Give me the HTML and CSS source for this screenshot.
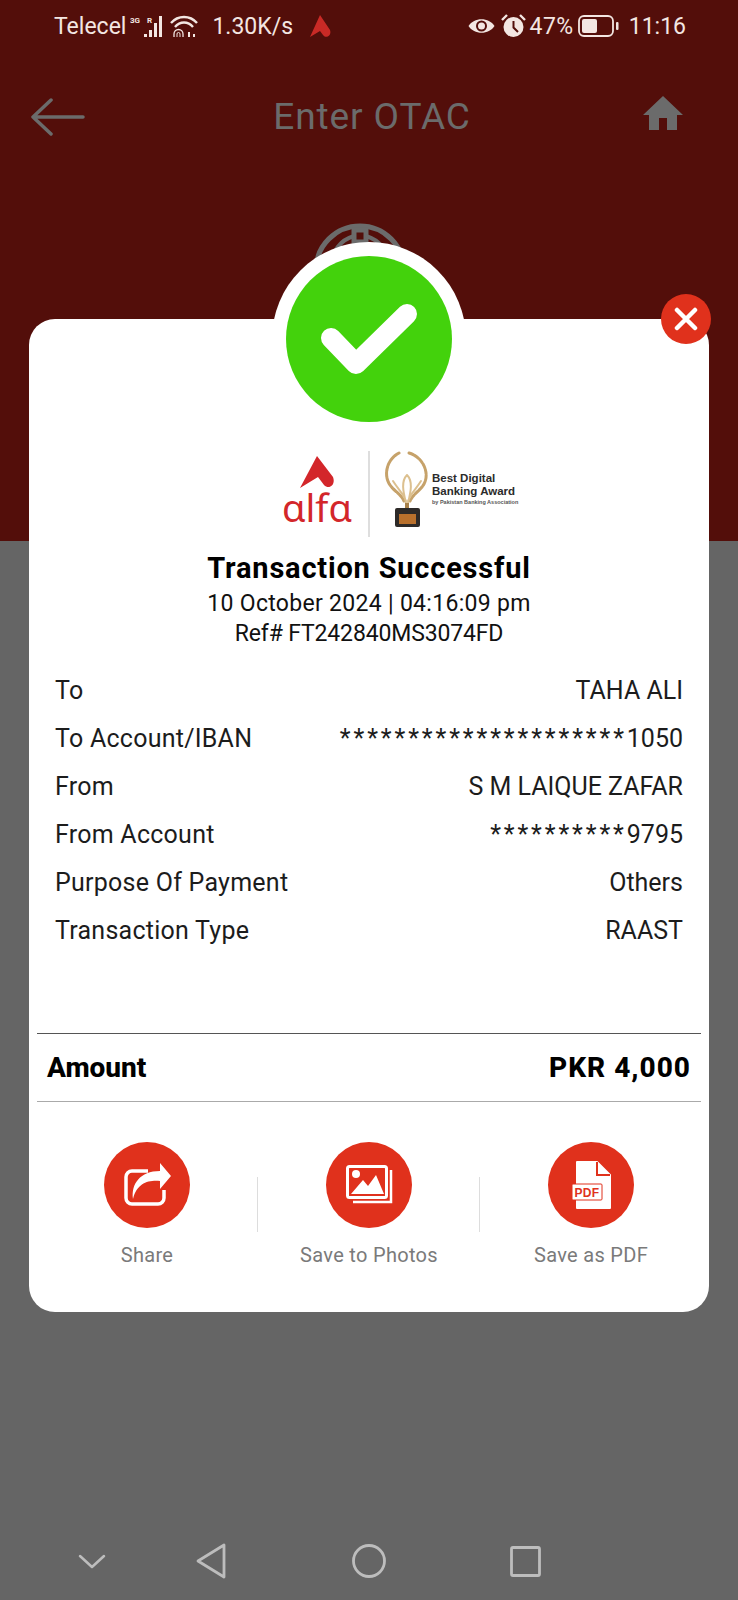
FILE: index.html
```html
<!DOCTYPE html>
<html lang="en">
<head>
  <meta charset="UTF-8">
  <title>Enter OTAC</title>
  <meta name="viewport" content="width=device-width, initial-scale=1.0"/>
  <link rel="stylesheet" href="styles.css">
</head>
<body>
  <div class="screen">
    <div class="top">
      <div class="status">
        <div class="status-left">
          <span>Telecel</span>
          <svg class="ic-signal" width="33" height="24" viewBox="0 0 33 24">
            <text x="0" y="9" class="tiny">3G</text>
            <text x="17" y="9" class="tiny">R</text>
            <g fill="#f3e6e2">
              <rect x="14" y="20" width="3" height="3"/>
              <rect x="19" y="16" width="3" height="7"/>
              <rect x="24" y="9" width="3" height="14"/>
              <rect x="29" y="2" width="3" height="21"/>
            </g>
          </svg>
          <svg class="ic-wifi" width="30" height="24" viewBox="0 0 30 24" fill="none" stroke="#f3e6e2" stroke-width="2.4">
            <path d="M1 9C8 1 20 1 27 9"/>
            <path d="M5 13C10 7 18 7 23 13"/>
            <path d="M4 23V20a4.500 4.500 0 0 1 9 0V23" stroke-width="1.300"/>
            <path d="M7 23V20a1.500 1.500 0 0 1 3 0V23" stroke-width="1"/>
            <path d="M19 18V23M24 20V23" stroke-width="2"/>
          </svg>
          <span class="speed">1.30K/s</span>
          <svg class="ic-flame" width="22" height="23" viewBox="0 0 22 23">
            <path d="M11 0L21 15C23 21 17 24 14 20L11 16L1 22Z" fill="#c92a26"/>
          </svg>
        </div>
        <div class="status-right">
          <svg width="27" height="18" viewBox="0 0 27 18">
            <path d="M0.500 9C6 0 21 0 26.500 9C21 18 6 18 0.500 9Z" fill="#f3e6e2"/>
            <circle cx="13.500" cy="9" r="5.500" fill="#530e0a"/>
            <circle cx="13.500" cy="9" r="3.500" fill="#f3e6e2"/>
          </svg>
          <svg class="ic-alarm" width="25" height="24" viewBox="0 0 25 24">
            <circle cx="12.500" cy="13" r="10" fill="#f3e6e2"/>
            <path d="M12.500 7V13.500L17 18" fill="none" stroke="#530e0a" stroke-width="2"/>
            <path d="M1 6L6 1M24 6L19 1" stroke="#f3e6e2" stroke-width="2.400"/>
          </svg>
          <span class="pct">47%</span>
          <svg class="ic-batt" width="41" height="22" viewBox="0 0 41 22">
            <rect x="1" y="1" width="34" height="20" rx="5" fill="none" stroke="#f3e6e2" stroke-width="1.800"/>
            <rect x="4" y="4" width="15" height="14" rx="2" fill="#f3e6e2"/>
            <rect x="38" y="7" width="2.500" height="8" rx="1" fill="#f3e6e2"/>
          </svg>
          <span class="clock">11:16</span>
        </div>
      </div>

      <div class="toolbar">
        <svg width="54" height="38" viewBox="0 0 54 38" fill="none" stroke="#6b6b6b" stroke-width="3.500" stroke-linecap="round" stroke-linejoin="round">
          <path d="M52 19H2M20 2L2 19L20 36"/>
        </svg>
        <h1>Enter OTAC</h1>
        <svg class="home" width="40" height="34" viewBox="0 0 40 34" fill="#6b6b6b">
          <path d="M20 0L40 19H34V34H24V22H16V34H6V19H0Z"/>
        </svg>
      </div>

      <svg class="globe" width="96" height="60" viewBox="0 0 96 60" fill="none" stroke="#6b6b6b" stroke-width="5">
        <circle cx="48" cy="48" r="44"/>
        <rect x="42" y="8" width="12" height="12"/>
        <path d="M42 14C28 18 20 30 18 44M54 14C68 18 76 30 78 44" stroke-width="4"/>
      </svg>
    </div>
    <div class="bottom"></div>

    <div class="modal">
      <div class="badge">
        <div class="badge-green">
          <svg width="96" height="72" viewBox="0 0 96 72" fill="none" stroke="#fff" stroke-width="20" stroke-linecap="round" stroke-linejoin="round">
            <path d="M10 35L35 61L86 11"/>
          </svg>
        </div>
      </div>
      <div class="close">
        <svg width="24" height="24" viewBox="0 0 24 24" stroke="#fff" stroke-width="4.500" stroke-linecap="round">
          <path d="M3 3L21 21M21 3L3 21"/>
        </svg>
      </div>

      <div class="logos">
        <div class="alfa">
          <svg width="35" height="33" viewBox="0 0 35 33">
            <path d="M17 0L33 21C36 29 29 34 24 29L18 21L0 32Z" fill="#d3262a"/>
          </svg>
          <span class="alfa-name">αlfα</span>
        </div>
        <div class="logo-line"></div>
        <div class="award">
          <svg width="46" height="76" viewBox="0 0 46 76" fill="none" stroke="#c6a26a" stroke-width="3" stroke-linecap="round">
            <path d="M15 2C3 8 -1 24 6 34C10 40 16 42 20 50" stroke-dasharray="5 1"/>
            <path d="M25 2C39 6 46 22 40 33C36 40 30 42 26 50" stroke-dasharray="5 1"/>
            <path d="M23 24C17 30 19 40 22 52M23 24C29 30 27 40 24 52M9 30C14 38 19 42 22 50M37 30C32 38 27 42 24 50" stroke="#dcc08f" stroke-width="2"/>
            <path d="M21 52H25V58H21Z" fill="#a9824a" stroke="none"/>
            <rect x="11" y="57" width="25" height="19" rx="2" fill="#2d2a28" stroke="none"/>
            <rect x="15" y="63" width="17" height="10" fill="#b8702c" stroke="none"/>
          </svg>
          <div class="award-text">
            <div>Best Digital</div>
            <div>Banking Award</div>
            <div class="award-by">by Pakistan Banking Association</div>
          </div>
        </div>
      </div>

      <div class="head">
        <h2>Transaction Successful</h2>
        <p>10 October 2024 | 04:16:09 pm</p>
        <p class="ref">Ref# FT242840MS3074FD</p>
      </div>

      <div class="rows">
        <div class="row"><span class="key">To</span><span>TAHA ALI</span></div>
        <div class="row"><span class="key">To Account/IBAN</span><span><span class="mask">*********************</span>1050</span></div>
        <div class="row"><span class="key">From</span><span>S M LAIQUE ZAFAR</span></div>
        <div class="row"><span class="key">From Account</span><span><span class="mask">**********</span>9795</span></div>
        <div class="row"><span class="key">Purpose Of Payment</span><span>Others</span></div>
        <div class="row"><span class="key">Transaction Type</span><span>RAAST</span></div>
      </div>

      <div class="amount"><span>Amount</span><span class="amount-value">PKR 4,000</span></div>

      <div class="actions">
        <div class="action">
          <div class="action-icon">
            <svg width="86" height="86" viewBox="0 0 86 86">
              <path d="M44 29H28a6 6 0 0 0-6 6V56a6 6 0 0 0 6 6H54a6 6 0 0 0 6-6V48" fill="none" stroke="#fff" stroke-width="3.500"/>
              <path d="M56 21L67 34L56 47V39C44 38 33 41 29 57C27 42 36 29 56 29Z" fill="#fff"/>
            </svg>
          </div>
          <span>Share</span>
        </div>
        <div class="action">
          <div class="action-icon">
            <svg width="86" height="86" viewBox="0 0 86 86">
              <rect x="21.500" y="24.500" width="39" height="31" rx="2" fill="none" stroke="#fff" stroke-width="3"/>
              <path d="M25 52L37 38L42 44L50 33L58 52Z" fill="#fff"/>
              <circle cx="30" cy="32" r="4" fill="#fff"/>
              <path d="M65 28V60H27" fill="none" stroke="#fff" stroke-width="2.500"/>
            </svg>
          </div>
          <span>Save to Photos</span>
        </div>
        <div class="action">
          <div class="action-icon">
            <svg width="86" height="86" viewBox="0 0 86 86">
              <path d="M29 20H49L62 33V66H29Z" fill="#fff" stroke="#fff" stroke-width="2" stroke-linejoin="round"/>
              <path d="M49 20V33H62" fill="none" stroke="#e0311c" stroke-width="2"/>
              <rect x="24" y="42" width="30" height="16" rx="1" fill="#fff" stroke="#e0311c" stroke-width="1"/>
              <text x="39" y="55" class="pdf">PDF</text>
            </svg>
          </div>
          <span>Save as PDF</span>
        </div>
      </div>
    </div>

    <div class="nav">
      <svg width="28" height="15" viewBox="0 0 28 15" fill="none" stroke="#bdbdbd" stroke-width="2.500" stroke-linecap="round" stroke-linejoin="round">
        <path d="M2 2L14 13L26 2"/>
      </svg>
      <svg width="30" height="36" viewBox="0 0 30 36" fill="none" stroke="#bdbdbd" stroke-width="2.800" stroke-linejoin="round">
        <path d="M28 2V34L2 18Z"/>
      </svg>
      <svg width="34" height="34" viewBox="0 0 34 34" fill="none" stroke="#bdbdbd" stroke-width="2.800">
        <circle cx="17" cy="17" r="15.500"/>
      </svg>
      <svg width="31" height="31" viewBox="0 0 31 31" fill="none" stroke="#bdbdbd" stroke-width="2.800">
        <rect x="1.500" y="1.500" width="28" height="28" rx="1.500"/>
      </svg>
    </div>
  </div>
</body>
</html>
```

FILE: styles.css
```css
* {
  box-sizing: border-box;
}
body {
  margin: 0;
  background-color: #656565;
  font-family: Roboto, 'Noto Sans', sans-serif;
}
.screen {
  position: relative;
  width: 738px;
  height: 1600px;
  overflow: hidden;
  display: flex;
  flex-direction: column;
}
.top {
  height: 541px;
  background-color: #530e0a;
}
.bottom {
  flex: 1;
}

/* status bar */
.status {
  height: 52px;
  padding: 0 52px 0 54px;
  display: flex;
  justify-content: space-between;
  align-items: center;
  color: #f3e6e2;
  font-size: 23px;
}
.status-left, .status-right {
  display: flex;
  align-items: center;
}
.tiny {
  font-size: 8px;
  font-weight: 700;
  fill: #f3e6e2;
}
.ic-signal {
  margin-left: 4px;
}
.ic-wifi {
  margin-left: 7px;
}
.speed {
  margin-left: 12px;
}
.ic-flame {
  margin-left: 16px;
}
.ic-alarm {
  margin-left: 6px;
}
.pct {
  margin-left: 4px;
  letter-spacing: 0.500px;
}
.ic-batt {
  margin-left: 4px;
}
.clock {
  margin-left: 10px;
}

/* toolbar */
.toolbar {
  height: 130px;
  padding: 0 55px 0 31px;
  display: flex;
  justify-content: space-between;
  align-items: center;
}
.toolbar h1 {
  margin: -2px 0 0 16px;
  color: #6b6b6b;
  font-size: 37px;
  font-weight: 400;
  letter-spacing: 0.900px;
}
.home {
  margin-bottom: 8px;
}
.globe {
  display: block;
  margin: 40px auto 0;
  transform: translateX(-9px);
}

/* modal */
.modal {
  position: absolute;
  top: 319px;
  left: 29px;
  width: 680px;
  height: 993px;
  background-color: #fff;
  border-radius: 26px;
  padding-top: 132px;
}
.badge {
  position: absolute;
  top: -77px;
  left: 243px;
  width: 194px;
  height: 194px;
  border-radius: 50%;
  background-color: #fff;
  display: flex;
  align-items: center;
  justify-content: center;
}
.badge-green {
  width: 166px;
  height: 166px;
  border-radius: 50%;
  background-color: #43d20c;
  display: flex;
  align-items: center;
  justify-content: center;
}
.close {
  position: absolute;
  top: -25px;
  right: -2px;
  width: 50px;
  height: 50px;
  border-radius: 50%;
  background-color: #e0311c;
  display: flex;
  align-items: center;
  justify-content: center;
}

.logos {
  height: 86px;
  display: flex;
  padding-left: 255px;
}
.alfa {
  width: 84px;
  padding: 5px 18px 0 0;
  display: flex;
  flex-direction: column;
  align-items: center;
  color: #d3262a;
}
.alfa-name {
  font-family: 'Noto Sans', sans-serif;
  font-size: 38px;
  line-height: 36px;
}
.logo-line {
  width: 2px;
  height: 86px;
  background-color: #dedede;
}
.award {
  display: flex;
  align-items: flex-start;
  margin-left: 14px;
}
.award-text {
  margin: 21px 0 0 2px;
  font-family: 'Liberation Sans', sans-serif;
  font-size: 11.500px;
  line-height: 13px;
  font-weight: 700;
  color: #2b2b2b;
}
.award-by {
  font-size: 5.500px;
  line-height: 8px;
  color: #555;
}

.head {
  margin-top: 12px;
  text-align: center;
  color: #111;
}
.head h2 {
  margin: 0 0 2px;
  font-size: 29px;
  line-height: 38px;
  font-weight: 700;
  letter-spacing: 0.800px;
  color: #000;
}
.head p {
  margin: 0;
  font-size: 23px;
  line-height: 29.500px;
  letter-spacing: 0.300px;
}
.head .ref {
  letter-spacing: -0.150px;
}

.rows {
  margin-top: 18px;
  padding: 0 26px;
  font-size: 25px;
  color: #1c1c1c;
}
.row {
  height: 48px;
  display: flex;
  justify-content: space-between;
  align-items: center;
}
.key {
  letter-spacing: 0.250px;
}
.mask {
  letter-spacing: 2.900px;
}

.amount {
  margin: 79px 8px 0;
  height: 69px;
  padding: 0 10px;
  border-top: 1px solid #555;
  border-bottom: 1px solid #aaa;
  display: flex;
  justify-content: space-between;
  align-items: center;
  font-size: 28px;
  font-weight: 800;
  color: #000;
}
.amount-value {
  letter-spacing: 1px;
}

.actions {
  margin-top: 40px;
  padding: 0 7px;
  display: flex;
}
.action {
  flex: 1;
  display: flex;
  flex-direction: column;
  align-items: center;
  gap: 15px;
  font-size: 20px;
  letter-spacing: 0.300px;
  color: #7a7a7a;
  position: relative;
}
.action + .action::before {
  content: "";
  position: absolute;
  left: -1px;
  top: 35px;
  height: 55px;
  width: 1px;
  background-color: #ddd;
}
.action-icon {
  width: 86px;
  height: 86px;
  border-radius: 50%;
  background-color: #e0311c;
}
.pdf {
  font-family: 'Liberation Sans', sans-serif;
  font-size: 12px;
  font-weight: 700;
  fill: #e0311c;
  text-anchor: middle;
}

/* android nav */
.nav {
  position: absolute;
  left: 78px;
  top: 1543px;
  height: 36px;
  display: flex;
  align-items: center;
}
.nav svg:nth-child(2) {
  margin-left: 90px;
}
.nav svg:nth-child(3) {
  margin-left: 126px;
}
.nav svg:nth-child(4) {
  margin-left: 124px;
}
```
